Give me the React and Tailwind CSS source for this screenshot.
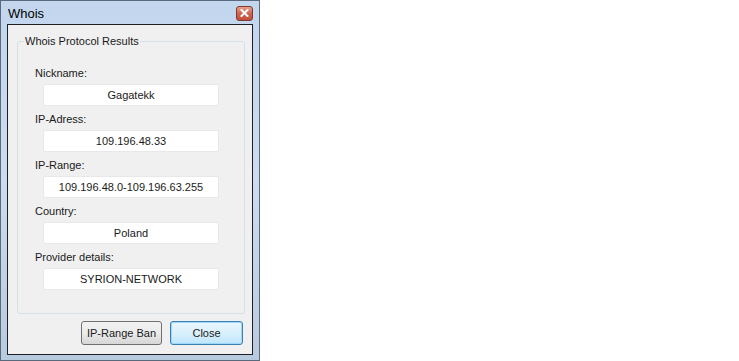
const fields = [
  { label: 'Nickname:', value: 'Gagatekk' },
  { label: 'IP-Adress:', value: '109.196.48.33' },
  { label: 'IP-Range:', value: '109.196.48.0-109.196.63.255' },
  { label: 'Country:', value: 'Poland' },
  { label: 'Provider details:', value: 'SYRION-NETWORK' },
]

function CloseGlyph() {
  return (
    <svg width="9" height="8" viewBox="0 0 9 8">
      <path d="M1.5 1 L7.5 7 M7.5 1 L1.5 7" stroke="#ffffff" strokeWidth="2" strokeLinecap="square" />
    </svg>
  )
}

export default function App() {
  return (
    <div
      className="w-[739px] h-[361px] bg-white flex text-[11px] text-[#1a1a1a]"
      style={{ fontFamily: '"Liberation Sans", Arial, sans-serif' }}
    >
      <div className="w-[260px] h-[361px] border border-[#5a6a7c] bg-gradient-to-b from-[#c2d6ee] via-[#cddcee] to-[#b8cade] flex flex-col px-[6px] pb-[5px]">
        <div className="h-[23px] flex items-center justify-between pl-[1px]">
          <span className="text-[13px] text-black leading-none pt-[2px]">Whois</span>
          <div className="w-[17px] h-[15px] rounded-[3px] border border-[#83382c] bg-gradient-to-b from-[#e6a08e] via-[#cf6450] to-[#c0503c] flex items-center justify-center mt-[1px]">
            <CloseGlyph />
          </div>
        </div>
        <div className="flex-1 border border-[#1e2024] bg-[#f0f0f0] flex flex-col">
          <fieldset className="mt-[9px] ml-[9px] mr-[7px] border border-[#d5dfe5] rounded-[3px] pl-[6px] pr-0 pb-[23px]">
            <legend className="px-[1px] leading-[15px]">Whois Protocol Results</legend>
            <div className="flex flex-col pt-[17px]">
              {fields.map((f) => (
                <div key={f.label} className="flex flex-col pl-[11px] mb-[6px] last:mb-0">
                  <span className="leading-[15px] h-[15px]">{f.label}</span>
                  <div className="mt-[3px] ml-[8px] w-[176px] h-[22px] bg-white border border-[#e8e8e8] rounded-[2px] flex items-center justify-center">
                    {f.value}
                  </div>
                </div>
              ))}
            </div>
          </fieldset>
          <div className="flex justify-end gap-[8px] mt-[7px] mr-[9px]">
            <button className="w-[81px] h-[24px] rounded-[3px] border border-[#707070] bg-gradient-to-b from-[#f2f2f2] via-[#ebebeb] to-[#d6d6d6] text-[11px]">
              IP-Range Ban
            </button>
            <button className="w-[73px] h-[24px] rounded-[3px] border border-[#3c7fb1] bg-gradient-to-b from-[#eaf6fd] via-[#d9f0fc] to-[#bee6fd] text-[11px] shadow-[inset_0_0_0_1px_#9ed7f7]">
              Close
            </button>
          </div>
        </div>
      </div>
    </div>
  )
}
